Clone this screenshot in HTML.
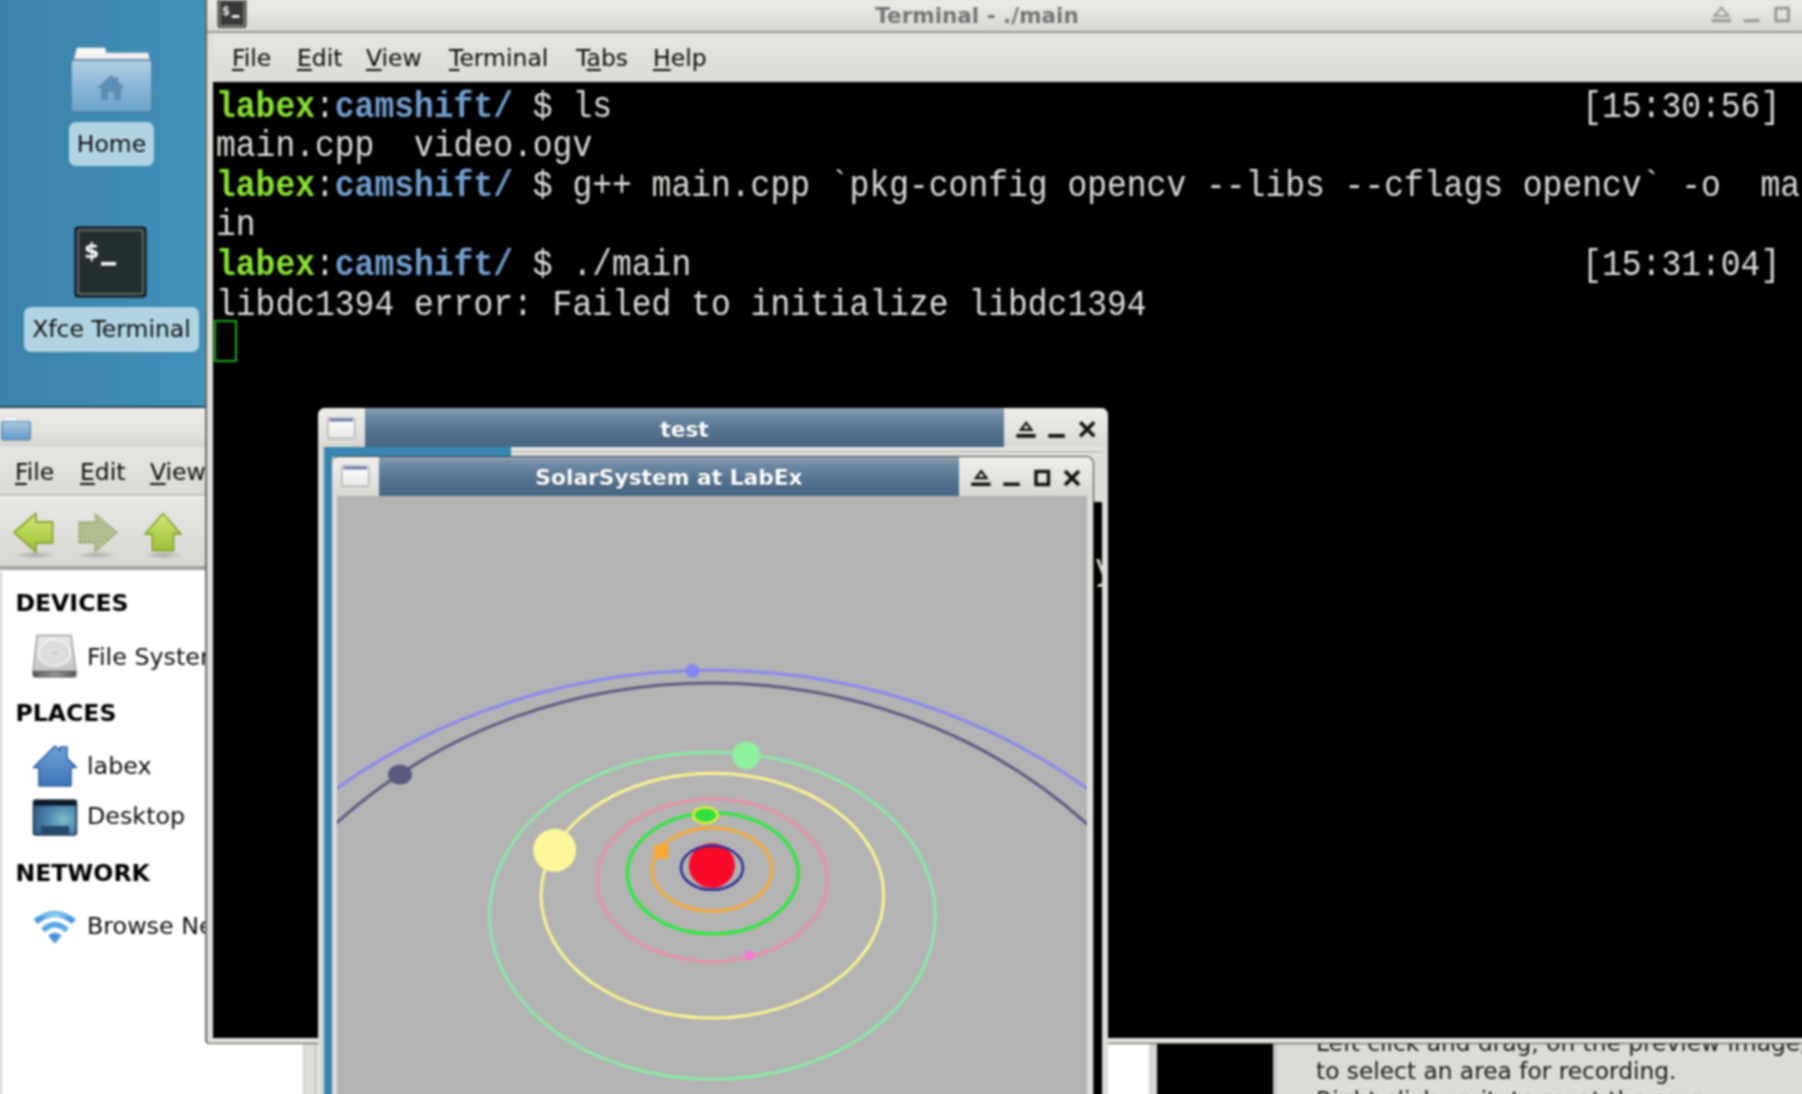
<!DOCTYPE html>
<html>
<head>
<meta charset="utf-8">
<title>Desktop</title>
<style>
html,body{margin:0;padding:0;}
body{width:1802px;height:1094px;overflow:hidden;position:relative;
  font-family:"DejaVu Sans","Liberation Sans",sans-serif;font-size:23.5px;color:#0a0a0a;
  background:linear-gradient(90deg,#3a82a9 0px,#4191b9 210px,#4191b9 100%);}
.abs{position:absolute;}
u{text-decoration:underline;text-underline-offset:3px;text-decoration-thickness:2px;}

/* desktop icons */
.dlabel{position:absolute;background:#b1d3e3;border-radius:7px;text-align:center;color:#111;white-space:nowrap;}

/* terminal window */
#term{position:absolute;left:206px;top:-4px;width:1610px;height:1048.3px;background:#dfded9;
  border:1px solid #55544f;border-radius:4px;box-sizing:border-box;box-shadow:-0.8px 0 0 #6a6965;}
#term .title{position:absolute;left:0;top:3px;right:0;height:33px;
  background:linear-gradient(#ebeae7,#e0dfdb 60%,#d9d8d3);border-bottom:2px solid #9a9995;box-sizing:border-box;}
#term .title .t{position:absolute;left:0;width:1540px;top:2px;text-align:center;font-weight:bold;color:#747474;font-size:21.5px;line-height:28px;}
#term .menu{position:absolute;left:6px;top:36px;right:0;height:50px;background:linear-gradient(#e6e5e1,#dbdad5);}
#term .menu span{position:absolute;top:10px;line-height:30px;}
#term .screen{position:absolute;left:6px;top:85px;width:1600px;height:955.6px;background:#000;}
.tt{position:absolute;left:2.6px;font-family:"Liberation Mono","DejaVu Sans Mono",monospace;font-size:36px;transform:scaleX(0.9165);transform-origin:0 0;line-height:39.6px;height:39.6px;white-space:pre;color:#dededa;}
.g{color:#8ae234;font-weight:bold;}
.b{color:#729fcf;font-weight:bold;}

/* thunar */
#thunar{position:absolute;left:-6px;top:408px;width:330px;height:700px;background:#fff;}
#thunar .title{position:absolute;left:0;top:-2px;width:100%;height:41px;background:linear-gradient(#ecebe8,#e3e2de 60%,#d6d5d0);border-top:2px solid #2a4658;box-sizing:border-box;}
#thunar .menu{position:absolute;left:0;top:39px;width:100%;height:49px;background:linear-gradient(#e6e5e1,#dbdad5);border-bottom:2px solid #c1c0bb;box-sizing:border-box;}
#thunar .tool{position:absolute;left:0;top:88px;width:100%;height:74px;background:linear-gradient(#e8e7e3,#d8d7d2);border-top:2px solid #f3f3f1;border-bottom:4px solid #a3a29d;box-sizing:border-box;}
#thunar .hd{position:absolute;left:21.4px;font-weight:bold;font-size:23.6px;color:#000;}
#thunar .it{position:absolute;left:93px;font-size:23.8px;color:#0c0c0c;white-space:nowrap;}

/* xfwm windows */
.xw{position:absolute;box-sizing:border-box;}
.xw .tb{position:absolute;background:linear-gradient(#8da2b5 0%,#6d89a4 20%,#55738f 58%,#466583 100%);}
.xw .ttl{position:absolute;text-align:center;color:#fff;font-weight:bold;font-size:21.75px;text-shadow:0 1px 1px rgba(0,0,0,.45);white-space:nowrap;}
</style>
</head>
<body>
<div id="root" style="position:absolute;left:0;top:0;width:1802px;height:1094px;filter:blur(0.8px);will-change:transform;">

<!-- ===== desktop icons ===== -->
<svg class="abs" style="left:60px;top:40px" width="104" height="80" viewBox="0 0 104 80">
  <defs>
    <linearGradient id="fg" x1="0" y1="0" x2="0" y2="1"><stop offset="0" stop-color="#b3d0e4"/><stop offset="0.5" stop-color="#8bb7d8"/><stop offset="1" stop-color="#6ba2cb"/></linearGradient>
    <linearGradient id="pg" x1="0" y1="0" x2="0" y2="1"><stop offset="0" stop-color="#ffffff"/><stop offset="1" stop-color="#e4e4e4"/></linearGradient>
  </defs>
  <path d="M14 20 L17 8 L45 8 L46 13 L88 13 L90 22 Z" fill="url(#pg)" stroke="#cfd3d6" stroke-width="1"/>
  <rect x="11" y="20" width="81" height="52" rx="3" fill="url(#fg)" stroke="#4f7fa6" stroke-width="1.6"/>
  <path d="M51 35 L37 48 L41 48 L41 60 L48 60 L48 52 L54 52 L54 60 L61 60 L61 48 L65 48 L58 41.5 L58 37 L55 37 L55 38.7 Z" fill="#5b8db5"/>
</svg>
<div class="dlabel" style="left:69px;top:122px;width:85px;height:44px;line-height:45px;">Home</div>

<svg class="abs" style="left:70px;top:222px" width="84" height="80" viewBox="0 0 84 80">
  <rect x="5.5" y="5.500" width="70" height="69" rx="3" fill="#262d30" stroke="#0e1113" stroke-width="2"/>
  <rect x="8" y="8" width="65" height="64" rx="2" fill="none" stroke="#5a6265" stroke-width="2.4"/>
  <text x="14" y="36" font-family="DejaVu Sans, sans-serif" font-weight="bold" font-size="22" fill="#fff">$</text>
  <rect x="31" y="40" width="15" height="3.5" fill="#fff"/>
</svg>
<div class="dlabel" style="left:24px;top:307px;width:175px;height:45px;line-height:44px;">Xfce Terminal</div>

<!-- ===== thunar (behind) ===== -->
<div id="thunar">
  <div class="title"></div>
  <div class="menu">
    <span class="abs" style="left:21px;top:9.6px;line-height:30px"><u>F</u>ile</span>
    <span class="abs" style="left:86px;top:9.6px;line-height:30px"><u>E</u>dit</span>
    <span class="abs" style="left:156px;top:9.6px;line-height:30px"><u>V</u>iew</span>
  </div>
  <div class="tool"></div>
  <!-- title folder icon -->
  <svg class="abs" style="left:6px;top:6px" width="32" height="28" viewBox="0 0 32 28">
    <defs><linearGradient id="tf" x1="0" y1="0" x2="0" y2="1"><stop offset="0" stop-color="#a9c9e2"/><stop offset="1" stop-color="#5f9bc9"/></linearGradient></defs>
    <path d="M2.500 8 L4 2.500 L16 2.500 L17 5 L29 5 L29.500 9 Z" fill="#f6f6f6" stroke="#cfd0d0" stroke-width="1"/>
    <rect x="1.800" y="7.500" width="28.500" height="18.500" rx="1.500" fill="url(#tf)" stroke="#4f7fa6" stroke-width="1.2"/>
  </svg>
  <!-- toolbar arrows -->
  <svg class="abs" style="left:6px;top:88px" width="200" height="66" viewBox="0 0 200 66">
    <defs>
      <linearGradient id="ag" x1="0" y1="0" x2="0" y2="1"><stop offset="0" stop-color="#d6e77c"/><stop offset="0.5" stop-color="#b8d353"/><stop offset="1" stop-color="#9fbf3a"/></linearGradient>
      <pattern id="dots" width="4.400" height="4.400" patternUnits="userSpaceOnUse"><rect width="4.400" height="4.400" fill="#dadcca"/><rect width="2.200" height="2.200" fill="#7f9644"/><rect x="2.200" y="2.200" width="2.200" height="2.200" fill="#8ea355"/></pattern>
      <radialGradient id="sh"><stop offset="0" stop-color="#000" stop-opacity="0.22"/><stop offset="1" stop-color="#000" stop-opacity="0"/></radialGradient>
    </defs>
    <ellipse cx="35" cy="59" rx="22" ry="4" fill="url(#sh)"/>
    <ellipse cx="97" cy="59" rx="20" ry="4" fill="url(#sh)"/>
    <ellipse cx="163" cy="59" rx="20" ry="4" fill="url(#sh)"/>
    <path d="M14 36.500 L36 17.500 L36 26 L52.500 26 L52.500 47 L36 47 L36 56 Z" fill="url(#ag)" stroke="#83a834" stroke-width="1.800" stroke-linejoin="round"/>
    <path d="M117 36.500 L95 17.500 L95 26 L79 26 L79 47 L95 47 L95 56 Z" fill="url(#dots)" stroke="#8c9c62" stroke-width="1.500" stroke-dasharray="2 2" stroke-linejoin="round"/>
    <path d="M163 17.500 L181 38 L173.500 38 L173.500 54.500 L152.500 54.500 L152.500 38 L145 38 Z" fill="url(#ag)" stroke="#83a834" stroke-width="1.800" stroke-linejoin="round"/>
  </svg>
  <!-- sidebar icons -->
  <svg class="abs" style="left:36px;top:224px" width="50" height="48" viewBox="0 0 50 48">
    <defs><linearGradient id="hd1" x1="0" y1="0" x2="0" y2="1"><stop offset="0" stop-color="#e9e9e9"/><stop offset="1" stop-color="#c4c4c4"/></linearGradient>
    <linearGradient id="hd2" x1="0" y1="0" x2="1" y2="0"><stop offset="0" stop-color="#555"/><stop offset="0.5" stop-color="#9a9a9a"/><stop offset="1" stop-color="#555"/></linearGradient></defs>
    <path d="M7 3.500 L41 3.500 L46 39.500 L3 39.500 Z" fill="url(#hd1)" stroke="#9b9b9b" stroke-width="1.400"/>
    <path d="M3 39.500 L46 39.500 L46 43.500 Q46 45 44 45 L5 45 Q3 45 3 43.500 Z" fill="url(#hd2)" stroke="#555" stroke-width="1"/>
    <ellipse cx="24.500" cy="21" rx="16" ry="13" fill="#dcdcdc" stroke="#f6f6f6" stroke-width="1.600"/>
    <ellipse cx="24.500" cy="21" rx="5" ry="3.500" fill="#cfcfcf" stroke="#f3f3f3" stroke-width="1"/>
  </svg>
  <svg class="abs" style="left:36px;top:335px" width="50" height="46" viewBox="0 0 50 46">
    <defs><linearGradient id="hm" x1="0" y1="0" x2="0" y2="1"><stop offset="0" stop-color="#6fa0d6"/><stop offset="1" stop-color="#3e74b8"/></linearGradient></defs>
    <path d="M25 3 L30 8 L30 4 L37 4 L37 15 L46.500 24.500 L41 24.500 L41 43 L9 43 L9 24.500 L3.500 24.500 Z" fill="url(#hm)" stroke="#2f5f9e" stroke-width="1.600" stroke-linejoin="round"/>
  </svg>
  <svg class="abs" style="left:36px;top:389px" width="50" height="42" viewBox="0 0 50 42">
    <defs><radialGradient id="dk" cx="0.7" cy="0.55" r="0.75"><stop offset="0" stop-color="#7cc0cc"/><stop offset="0.5" stop-color="#4f86ac"/><stop offset="1" stop-color="#2f5d8c"/></radialGradient></defs>
    <rect x="3.500" y="3" width="43" height="35" rx="2.500" fill="url(#dk)" stroke="#1f3550" stroke-width="1.600"/>
    <rect x="4" y="3.500" width="42" height="5" fill="#101820"/>
    <rect x="11" y="29" width="28" height="8.500" fill="#27496b"/>
  </svg>
  <svg class="abs" style="left:36px;top:499px" width="50" height="40" viewBox="0 0 50 40">
    <defs><radialGradient id="wf" cx="0.5" cy="0.1" r="0.6"><stop offset="0" stop-color="#95daf2"/><stop offset="1" stop-color="#4796de"/></radialGradient></defs>
    <g fill="none">
      <path d="M5.600 14.700 Q24.800 -0.900 44 14.700" stroke-width="6.200" stroke="url(#wf)"/>
      <path d="M13 23.300 Q24.900 11.900 36.900 23.300" stroke-width="5.600" stroke="#55a6e6"/>
    </g>
    <path d="M18 28.600 Q24.800 23 31.700 28.600 L24.800 36.800 Z" fill="#4a8fdc"/>
  </svg>

  <div class="abs" style="left:6px;top:164px;width:1.6px;height:600px;background:#c9c8c3"></div>
  <div class="hd" style="top:181px">DEVICES</div>
  <div class="it" style="top:235px">File System</div>
  <div class="hd" style="top:290.5px">PLACES</div>
  <div class="it" style="top:344px">labex</div>
  <div class="it" style="top:394px">Desktop</div>
  <div class="hd" style="top:451.3px">NETWORK</div>
  <div class="it" style="top:503.7px">Browse Network</div>
</div>


<!-- ===== stuff below the terminal (other windows peeking out) ===== -->
<div class="abs" style="left:206px;top:1043px;width:97px;height:60px;background:#fff"></div>
<div class="abs" style="left:302.5px;top:1043px;width:14px;height:60px;background:linear-gradient(90deg,#d2d1cc,#e0dfda 30%,#dcdbd6 80%,#b9b8b3)"></div>
<div class="abs" style="left:1108px;top:1043px;width:42px;height:60px;background:#fff"></div>
<div class="abs" style="left:1149px;top:1043px;width:8px;height:60px;background:#d6d5d0"></div>
<div class="abs" style="left:1156.6px;top:1043px;width:117px;height:60px;background:#000"></div>
<div class="abs" style="left:1273px;top:1043px;width:540px;height:60px;background:#dcdbd7;border-left:4px solid #c4c3be;box-sizing:border-box;"></div>
<div class="abs" style="left:1316px;top:1028.5px;font-size:23.3px;line-height:28.6px;color:#1a1a1a;white-space:nowrap;">Left click and drag, on the preview image,<br>to select an area for recording.<br>Right click on it, to reset the area.</div>

<!-- ===== terminal window ===== -->
<div id="term">
  <div class="title"><svg class="abs" style="left:10px;top:0px" width="32" height="30" viewBox="0 0 32 30">
      <rect x="0.500" y="-3" width="29" height="31" rx="3" fill="#3b3b39"/>
      <rect x="2.800" y="0.500" width="24.400" height="25.500" rx="1.5" fill="#383836" stroke="#7d7d7b" stroke-width="1.8"/>
      <text x="5" y="14.600" font-family="DejaVu Sans, sans-serif" font-weight="bold" font-size="11.5" fill="#e4e4e4">$</text>
      <rect x="14.800" y="15" width="7.6" height="2.8" fill="#f2f2f2"/>
    </svg><div class="t">Terminal - ./main</div>
    <svg class="abs" style="left:1495px;top:0" width="110" height="32" viewBox="0 0 110 32"><g fill="none" stroke="#9a9a98" stroke-width="3.2"><path d="M12.500 16 L19.500 7.500 L26.500 16 Z" stroke-width="2"/><path d="M9.500 20.700 H29"/><path d="M41.800 20.700 H57.500"/><rect x="73.800" y="8.200" width="12.700" height="12.700" stroke-width="3"/></g></svg>
  </div>
  <div class="menu">
    <span style="left:19px"><u>F</u>ile</span>
    <span style="left:84px"><u>E</u>dit</span>
    <span style="left:153px"><u>V</u>iew</span>
    <span style="left:236px"><u>T</u>erminal</span>
    <span style="left:363px">T<u>a</u>bs</span>
    <span style="left:440px"><u>H</u>elp</span>
  </div>
  <div class="screen">
    <div class="tt" style="top:5.6px"><span class="g">labex</span>:<span class="b">camshift/</span> $ ls                                                 [15:30:56]</div>
    <div class="tt" style="top:45.2px">main.cpp  video.ogv</div>
    <div class="tt" style="top:84.8px"><span class="g">labex</span>:<span class="b">camshift/</span> $ g++ main.cpp `pkg-config opencv --libs --cflags opencv` -o  ma</div>
    <div class="tt" style="top:124.4px">in</div>
    <div class="tt" style="top:164px"><span class="g">labex</span>:<span class="b">camshift/</span> $ ./main                                             [15:31:04]</div>
    <div class="tt" style="top:203.6px">libdc1394 error: Failed to initialize libdc1394</div>
    <div class="abs" style="left:0.6px;top:238px;width:23.4px;height:42.4px;border:2.6px solid #1cae1c;box-sizing:border-box;"></div>
  </div>
</div>


<!-- ===== "test" window ===== -->
<div class="xw" id="wtest" style="left:317.5px;top:407.5px;width:790.5px;height:700px;background:#dddcd7;border-radius:7px 7px 0 0;overflow:hidden;">
  <div class="abs" style="left:0;top:0;width:100%;height:39.5px;background:linear-gradient(#efeeeb,#e4e3df 55%,#d8d7d2)"></div>
  <div class="tb" style="left:47.5px;top:0;width:639px;height:39.5px;"></div>
  <div class="ttl" style="left:47.5px;top:1px;width:639px;line-height:42px;">test</div>
  <!-- left icon -->
  <svg class="abs" style="left:8px;top:8px" width="32" height="28" viewBox="0 0 32 28"><defs><linearGradient id="wi1" x1="0" y1="0" x2="0" y2="1"><stop offset="0" stop-color="#ffffff"/><stop offset="1" stop-color="#e6e6e3"/></linearGradient></defs><rect x="1.800" y="2" width="27" height="20.500" rx="1.5" fill="url(#wi1)" stroke="#b4b3b8" stroke-width="1.5"/><rect x="3.500" y="2.800" width="23.600" height="2.600" fill="#6272a6"/></svg>
  <!-- buttons -->
  <svg class="abs" style="left:690px;top:0" width="100" height="40" viewBox="0 0 100 40">
    <g fill="none" stroke="#111" stroke-width="3.6">
      <path d="M12.900 21.900 L18.200 14.900 L23.500 21.900 Z" stroke-width="2.2" stroke-linejoin="miter"/><path d="M8.400 27.900 H27.600"/>
      <path d="M40.300 27.900 H56.800"/>
      <path d="M72.200 14.200 L86.200 28.200 M86.200 14.200 L72.200 28.200" stroke-width="3.6"/>
    </g>
  </svg>
  <!-- below title strip -->
  <div class="abs" style="left:5.8px;top:39.500px;width:188px;height:10px;background:#3787b0"></div>
  <div class="abs" style="left:193.5px;top:39.500px;width:592px;height:10px;background:linear-gradient(#e6e5e1 0,#e6e5e1 3px,#c9c8c3 4px,#c9c8c3 5.5px,#e0dfdb 6.5px)"></div>
  <!-- left inner blue -->
  <div class="abs" style="left:5.8px;top:39.500px;width:9px;height:700px;background:linear-gradient(90deg,#b9d3e2 0,#3783ab 2.5px,#3783ab 100%)"></div>
  <!-- right black strip -->
  <div class="abs" style="left:776.8px;top:94px;width:7.4px;height:700px;background:#000;overflow:hidden;"><div class="tt" style="left:0.5px;top:48.1px;">y</div></div>
</div>

<!-- ===== "SolarSystem at LabEx" window ===== -->
<div class="xw" id="wsolar" style="left:331.7px;top:455.5px;width:762px;height:660px;background:#dddcd7;border-radius:8px 8px 0 0;overflow:hidden;border-top:1.5px solid #3c4246;border-right:1.500px solid #3c4246;">
  <div class="abs" style="left:0;top:0;width:100%;height:39px;background:linear-gradient(#efeeeb,#e4e3df 55%,#d8d7d2)"></div>
  <div class="tb" style="left:47.3px;top:0;width:580px;height:39px;"></div>
  <div class="ttl" style="left:47.3px;top:0.2px;width:580px;line-height:42px;">SolarSystem at LabEx</div>
  <svg class="abs" style="left:8px;top:7px" width="32" height="28" viewBox="0 0 32 28"><defs><linearGradient id="wi2" x1="0" y1="0" x2="0" y2="1"><stop offset="0" stop-color="#ffffff"/><stop offset="1" stop-color="#e6e6e3"/></linearGradient></defs><rect x="1.800" y="2" width="27" height="20.500" rx="1.5" fill="url(#wi2)" stroke="#b4b3b8" stroke-width="1.5"/><rect x="3.500" y="2.800" width="23.600" height="2.600" fill="#6272a6"/></svg>
  <svg class="abs" style="left:632px;top:0" width="128" height="40" viewBox="0 0 128 40">
    <g fill="none" stroke="#111" stroke-width="3.6">
      <path d="M11.900 21.100 L17.200 14.100 L22.500 21.100 Z" stroke-width="2.2"/><path d="M7.200 27.200 H26.600"/>
      <path d="M39.300 27.200 H55.800"/>
      <rect x="72" y="14.500" width="12.5" height="13" stroke-width="3.4"/>
      <path d="M101 14 L115 28 M115 14 L101 28" stroke-width="3.8"/>
    </g>
  </svg>
  <!-- content -->
  <div class="abs" style="left:5.8px;top:39px;width:750px;height:640px;background:#b3b3b3;overflow:hidden;">
   <svg class="abs" style="left:0;top:0" width="750" height="620" viewBox="337.5 496 750 620">
    <g fill="none" stroke-width="3.4">
      <ellipse cx="712.45" cy="1259.2" rx="624.2" ry="589" stroke="#8888f0" stroke-width="3"/>
      <ellipse cx="711.6" cy="1162.4" rx="530.5" ry="479.5" stroke="#5c5c80" stroke-width="3"/>
      <ellipse cx="712.9" cy="915.6" rx="222.8" ry="163.7" stroke="#8aeaa6" stroke-width="3"/>
      <ellipse cx="712.9" cy="895.6" rx="171.3" ry="122.4" stroke="#fbf391" stroke-width="3"/>
      <ellipse cx="712.9" cy="880.2" rx="115" ry="81.2" stroke="#ee8da2" stroke-width="2.7"/>
      <ellipse cx="713.3" cy="873.3" rx="85.5" ry="60.5" stroke="#2ee83e" stroke-width="3.3"/>
      <ellipse cx="712.5" cy="869.5" rx="59.8" ry="41.6" stroke="#f0a83c" stroke-width="3.3"/>
    </g>
    <circle cx="693" cy="671" r="7" fill="#8686f2"/>
    <ellipse cx="400.5" cy="774.6" rx="12" ry="10" fill="#5a5a7e"/>
    <circle cx="746.7" cy="755.4" r="14" fill="#8ff0a0"/>
    <circle cx="555.2" cy="850.3" r="21.5" fill="#fdf79a"/>
    <circle cx="750" cy="955.4" r="5" fill="#f57ad6"/>
    <ellipse cx="706" cy="815.2" rx="12" ry="8" fill="#2fe23c" stroke="#e8ec3a" stroke-width="2.4"/>
    <rect x="654.500" y="844.500" width="14.500" height="14.500" rx="2.500" fill="#f5a733"/>
    <ellipse cx="712.4" cy="865.6" rx="23" ry="22.300" fill="#fa0a28"/>
    <ellipse cx="712.5" cy="867.8" rx="31" ry="22" fill="none" stroke="#2c2f96" stroke-width="2.6"/>
   </svg>
  </div>
</div>

</div>
</body>
</html>
